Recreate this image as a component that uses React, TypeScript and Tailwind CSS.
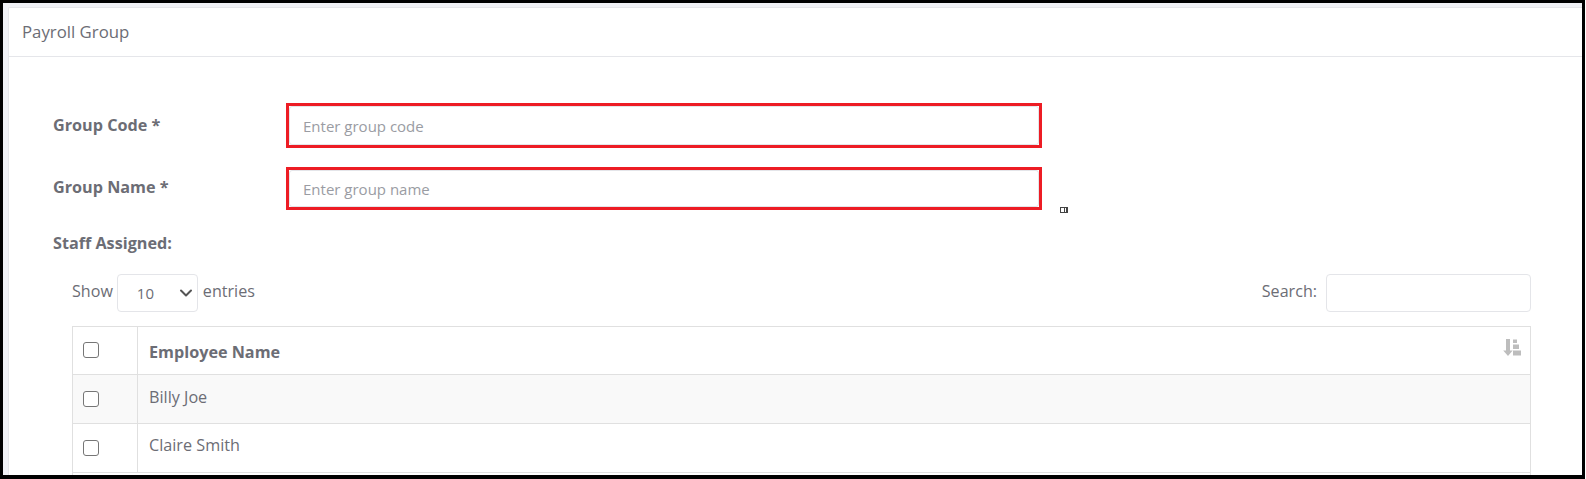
import { ChevronDown } from "lucide-react";

function Field({ label, placeholder, boxClass, labelClass }: { label: string; placeholder: string; boxClass: string; labelClass: string }) {
  return (
    <div className="flex items-start">
      <label className={`w-[233px] text-[16.2px] leading-[24px] font-bold text-[#6c6d75] ${labelClass}`}>{label}</label>
      <div className={`w-[756px] border-[3px] border-[#ed1c24] bg-white ${boxClass}`}>
        <input
          placeholder={placeholder}
          className="w-full h-full pl-[13px] pt-[1px] text-[15px] text-[#6c6d75] placeholder:text-[#9a9ca3] bg-white rounded-[3px] border border-[#e4e5e9] outline-none"
        />
      </div>
    </div>
  );
}

function SortIcon() {
  return (
    <svg width="18" height="17" viewBox="0 0 18 17" className="mt-[12px] text-[#bdbdbd]" fill="currentColor">
      <path d="M3 0h4v11.5h2.7L5 17 .2 11.5H3z" />
      <rect x="10" y="0.5" width="4" height="3.5" />
      <rect x="10" y="5.5" width="6" height="4.5" />
      <rect x="10" y="11.5" width="8" height="5" />
    </svg>
  );
}

function Row({ name, shaded, textClass }: { name: string; shaded?: boolean; textClass: string }) {
  return (
    <div className={`flex h-[49px] border-t border-[#e0e0e0] ${shaded ? "bg-[#f9f9f9]" : "bg-white"}`}>
      <div className="w-[65px] shrink-0 border-r border-[#e0e0e0] flex items-center pl-[10px]">
        <span className="w-[16px] h-[16px] rounded-[3px] border border-[#767676] bg-white" />
      </div>
      <div className={`flex-1 pl-[11px] text-[16.2px] leading-[24px] text-[#6c6d75] ${textClass}`}>{name}</div>
    </div>
  );
}

export default function App() {
  return (
    <div className="w-[1586px] h-[479px] overflow-hidden bg-white font-['Open_Sans','Noto_Sans',sans-serif]">
      <div className="w-[1585px] h-[479px] overflow-hidden border-x-[3px] border-t-[3px] border-b-[4px] border-black bg-[#f0f1f6] pl-[5px] pt-[4px]">
        <div className="bg-white h-full border-l border-t border-[#e5e6ea] rounded-tl-[2px]">
          <div className="h-[49px] border-b border-[#e5e6ea] pl-[13px] pt-[12px] text-[16.8px] leading-[24px] text-[#6c6d75]">
            Payroll Group
          </div>
          <div className="pl-[44px] pt-[46px]">
            <div className="flex flex-col gap-[19px]">
              <Field label="Group Code *" placeholder="Enter group code" boxClass="h-[45px]" labelClass="pt-[10px]" />
              <div className="relative">
                <Field label="Group Name *" placeholder="Enter group name" boxClass="h-[43px]" labelClass="pt-[8px]" />
                <span className="absolute left-[1007px] top-[40px] w-[8px] h-[6px] bg-[#444] flex gap-[1px] p-[1px]">
                  <span className="w-[3px] h-full bg-white" />
                  <span className="w-[1px] h-full bg-white" />
                </span>
              </div>
            </div>
            <div className="mt-[21px] text-[16.2px] leading-[24px] font-bold text-[#6c6d75]">Staff Assigned:</div>
            <div className="ml-[19px] mt-[19px] w-[1459px]">
              <div className="flex justify-between items-start text-[16.1px] leading-[24px] text-[#6c6d75]">
                <div className="flex items-start">
                  <span className="pt-[5px]">Show</span>
                  <div className="ml-[4px] w-[81px] h-[38px] rounded-[4px] border border-[#e4e5e9] flex items-center justify-between pl-[19px] pr-[1px] text-[15px]">
                    <span>10</span>
                    <ChevronDown size={20} strokeWidth={2.4} className="text-[#555]" />
                  </div>
                  <span className="ml-[5px] pt-[5px]">entries</span>
                </div>
                <div className="flex items-start">
                  <span className="pt-[5px]">Search:</span>
                  <div className="ml-[9px] w-[205px] h-[38px] rounded-[4px] border border-[#e4e5e9] bg-white" />
                </div>
              </div>
              <div className="mt-[14px] border-x border-[#e0e0e0]">
                <div className="flex h-[48px] border-t border-[#e0e0e0] bg-white">
                  <div className="w-[65px] shrink-0 border-r border-[#e0e0e0] pl-[10px] pt-[15px]">
                    <span className="block w-[16px] h-[16px] rounded-[3px] border border-[#767676] bg-white" />
                  </div>
                  <div className="flex-1 flex justify-between pl-[11px] pr-[9px]">
                    <span className="pt-[13px] text-[16.2px] leading-[24px] font-bold text-[#6c6d75]">Employee Name</span>
                    <SortIcon />
                  </div>
                </div>
                <Row name="Billy Joe" shaded textClass="pt-[10px]" />
                <Row name="Claire Smith" textClass="pt-[9px]" />
                <div className="h-[4px] border-t border-[#e0e0e0]" />
              </div>
            </div>
          </div>
        </div>
      </div>
    </div>
  );
}
